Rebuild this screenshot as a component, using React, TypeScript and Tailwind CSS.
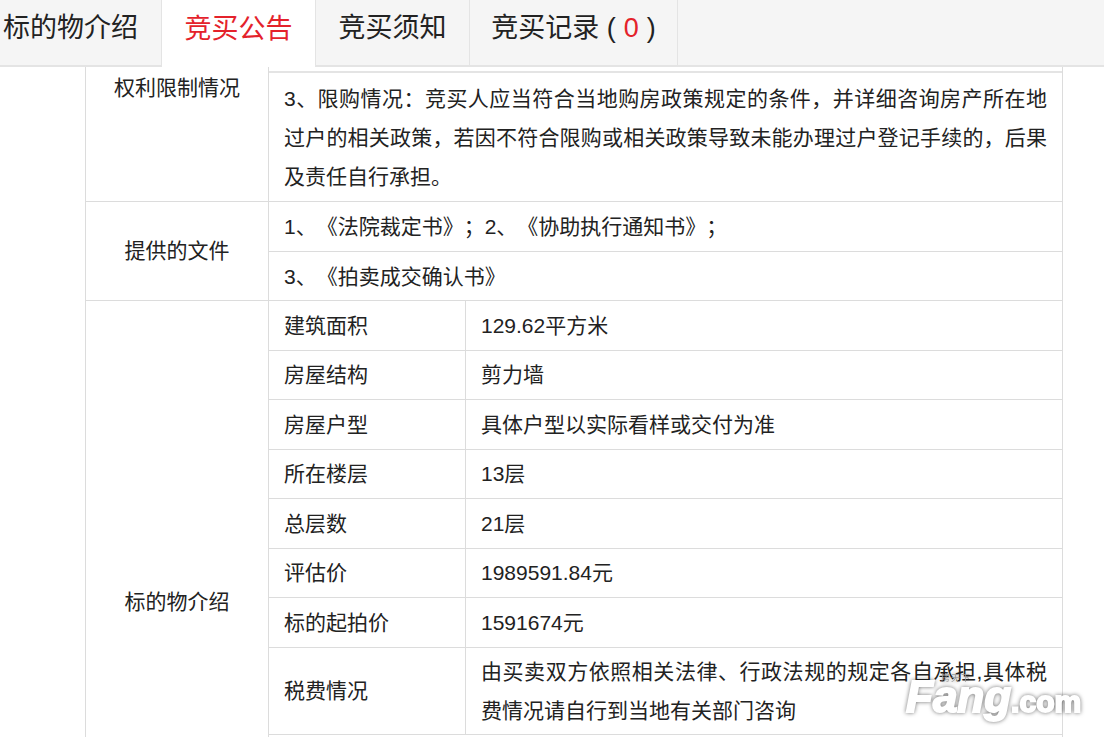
import React from 'react';

const FONT = "font-['Liberation_Sans','Noto_Sans_CJK_SC',sans-serif]";

const specs = [
  ['建筑面积', '129.62平方米', 'h-[50px]'],
  ['房屋结构', '剪力墙', 'h-[49px]'],
  ['房屋户型', '具体户型以实际看样或交付为准', 'h-[50px]'],
  ['所在楼层', '13层', 'h-[49px]'],
  ['总层数', '21层', 'h-[50px]'],
  ['评估价', '1989591.84元', 'h-[49px]'],
  ['标的起拍价', '1591674元', 'h-[50px]'],
];

const App: React.FC = () => {
  return (
    <div className={`${FONT} relative h-[737px] w-[1104px] overflow-hidden bg-white text-[21px] text-[#222] [text-spacing-trim:space-all]`}>
      {/* tabs */}
      <div className="flex h-[67px] border-b-2 border-[#e4e4e4] bg-[#f5f5f5] text-[27px]">
        <div className="flex w-[162px] items-center border-r border-[#e4e4e4] pb-[8px] pl-[3px]">标的物介绍</div>
        <div className="-mb-[2px] flex w-[154px] items-center justify-center border-r border-[#e4e4e4] bg-white pb-[8px] text-[#e4222b]">竞买公告</div>
        <div className="flex w-[154px] items-center justify-center border-r border-[#e4e4e4] pb-[8px]">竞买须知</div>
        <div className="flex w-[208px] items-center justify-center border-r border-[#e4e4e4] pb-[8px]">
          竞买记录 (<span className="mx-2 text-[#e4222b]">0</span>)
        </div>
      </div>

      {/* table */}
      <div className="ml-[85px] w-[978px] border-x border-[#dcdcdc]">
        <div className="flex h-[135px] border-b border-[#dcdcdc]">
          <div className="w-[183px] shrink-0 border-r border-[#dcdcdc] pt-[5px] text-center">权利限制情况</div>
          <div className="flex-1">
            <div className="h-[6px] border-b-2 border-[#e4e4e4]"></div>
            <div className="px-[15px] pt-[6px] text-justify leading-[39px]">
              3、限购情况：竞买人应当符合当地购房政策规定的条件，并详细咨询房产所在地过户的相关政策，若因不符合限购或相关政策导致未能办理过户登记手续的，后果及责任自行承担。
            </div>
          </div>
        </div>

        <div className="flex h-[99px] border-b border-[#dcdcdc]">
          <div className="flex w-[183px] shrink-0 items-center justify-center border-r border-[#dcdcdc]">提供的文件</div>
          <div className="flex-1">
            <div className="flex h-[50px] items-center border-b border-[#dcdcdc] px-[15px]">1、《法院裁定书》；2、《协助执行通知书》；</div>
            <div className="flex h-[49px] items-center px-[15px]">3、《拍卖成交确认书》</div>
          </div>
        </div>

        <div className="flex">
          <div className="flex w-[183px] shrink-0 items-center justify-center border-r border-[#dcdcdc]">标的物介绍</div>
          <div className="flex-1">
            {specs.map(([label, value, height]) => (
              <div key={label} className={`flex ${height} border-b border-[#dcdcdc]`}>
                <div className="flex w-[197px] shrink-0 items-center border-r border-[#dcdcdc] pl-[15px]">{label}</div>
                <div className="flex flex-1 items-center pl-[15px]">{value}</div>
              </div>
            ))}
            <div className="flex h-[87px] border-b border-[#dcdcdc]">
              <div className="flex w-[197px] shrink-0 items-center border-r border-[#dcdcdc] pl-[15px]">税费情况</div>
              <div className="flex-1 px-[15px] py-[4px] text-justify leading-[39px]">
                由买卖双方依照相关法律、行政法规的规定各自承担,具体税费情况请自行到当地有关部门咨询
              </div>
            </div>
            <div className="h-[168px]"></div>
          </div>
        </div>
      </div>

      {/* watermark */}
      <div className="absolute left-[906px] top-[675px] font-['Liberation_Sans','Noto_Sans_CJK_SC',sans-serif] text-white [filter:drop-shadow(0_0_2px_rgba(0,0,0,0.55))]">
        <div className="absolute left-[35px] top-[-1px] whitespace-nowrap text-[9px] leading-none tracking-[1px] text-[#999]">房天下</div>
        <div className="flex items-baseline whitespace-nowrap font-bold italic leading-none [-webkit-text-stroke:2px_white]">
          <span className="text-[44px]">Fang</span>
          <span className="text-[30px] not-italic">.com</span>
        </div>
      </div>
    </div>
  );
};

export default App;
